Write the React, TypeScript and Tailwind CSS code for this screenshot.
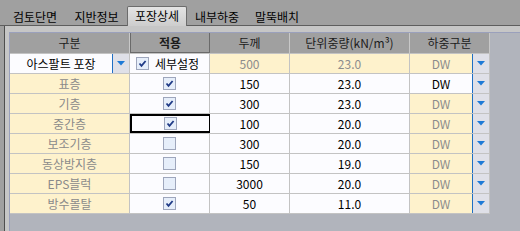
import React from "react";

const FONT = { fontFamily: '"Noto Sans CJK KR", "Noto Sans", sans-serif' };

const tabs = [
  { label: "검토단면", w: "w-[62px]" },
  { label: "지반정보", w: "w-[61px]" },
  { label: "포장상세", w: "w-[60px]", active: true },
  { label: "내부하중", w: "w-[60px]" },
  { label: "말뚝배치", w: "w-[60px]" },
];

const layers = [
  { name: "표층", checked: true, thick: "150", unit: "23.0", editable: true },
  { name: "기층", checked: true, thick: "300", unit: "23.0" },
  { name: "중간층", checked: true, thick: "100", unit: "20.0", focused: true },
  { name: "보조기층", checked: false, thick: "300", unit: "20.0" },
  { name: "동상방지층", checked: false, thick: "150", unit: "19.0" },
  { name: "EPS블럭", checked: false, thick: "3000", unit: "20.0" },
  { name: "방수몰탈", checked: true, thick: "50", unit: "11.0" },
];

function CheckBox({ checked }: { checked: boolean }) {
  return (
    <div className="flex h-[13px] w-[13px] items-center justify-center border border-[#9ea6bc] bg-[#e6eefa]">
      {checked ? (
        <svg width="11" height="11" viewBox="0 0 11 11">
          <path
            d="M2.5 5.5 L4.5 7.8 L8.6 3"
            fill="none"
            stroke="#1f3a86"
            strokeWidth="1.8"
          />
        </svg>
      ) : null}
    </div>
  );
}

function DropButton() {
  return (
    <div className="flex h-full w-[17px] shrink-0 items-center justify-center border-l border-[#1f6fc4] bg-[#dfe0e8]">
      <svg width="8" height="5" viewBox="0 0 8 5">
        <path d="M0 0 H8 L4 4.5 Z" fill="#1e7ad6" />
      </svg>
    </div>
  );
}

const cellBase =
  "flex h-full shrink-0 items-center justify-center border-r border-[#c3c3c3]";

export default function App() {
  return (
    <div
      className="relative h-[231px] w-[520px] overflow-hidden bg-[#a0a0a0] text-[12px] leading-none"
      style={FONT}
    >
      {/* tab strip */}
      <div className="flex h-[26px] items-end border-b border-[#5e5e5e] pl-[4px]">
        {tabs.map((t) =>
          t.active ? (
            <div
              key={t.label}
              className={`${t.w} -mb-px flex h-[20px] items-center justify-center rounded-t-[2px] border border-b-0 border-[#6c6c6c] bg-gradient-to-b from-[#e4e4e4] to-[#cdcdcd] pb-[2px] text-black`}
            >
              {t.label}
            </div>
          ) : (
            <div
              key={t.label}
              className={`${t.w} flex h-[18px] items-center justify-center pt-[1px] text-black`}
            >
              {t.label}
            </div>
          )
        )}
      </div>

      {/* tab page */}
      <div className="flex h-[205px]">
        <div className="w-[4px] shrink-0 bg-[#a0a0a0]" />
        <div className="flex flex-1 flex-col border-l border-[#4e4e4e] bg-[#c6c6c6] pl-[4px] pt-[6px]">
          <div className="flex-1 border-l border-t border-[#9aa0bc] bg-[#b1b4bc]">
            {/* header */}
            <div className="flex h-[21px] w-[480px] border-b border-[#c3c3c3] bg-[#a0a0a0] text-[#1c1c1c]">
              <div className="flex h-full w-[120px] items-center justify-center border-r border-[#c8c8c8]">
                구분
              </div>
              <div className="flex h-full w-[80px] items-center justify-center border border-t-0 border-[#6a6a6a] font-bold">
                적용
              </div>
              <div className="flex h-full w-[80px] items-center justify-center border-r border-[#c8c8c8]">
                두께
              </div>
              <div className="flex h-full w-[120px] items-center justify-center border-r border-[#c8c8c8]">
                단위중량(kN/m³)
              </div>
              <div className="flex h-full w-[80px] items-center justify-center border-r border-[#c8c8c8]">
                하중구분
              </div>
            </div>

            {/* pavement type row */}
            <div className="flex h-[20px] w-[480px] border-b border-[#c3c3c3]">
              <div className="flex h-full w-[120px] shrink-0 border-r border-[#c3c3c3] bg-[#fcfcff]">
                <div className="flex flex-1 items-center justify-center text-black">
                  아스팔트 포장
                </div>
                <DropButton />
              </div>
              <div className="flex h-full w-[80px] shrink-0 items-center gap-[6px] border-r border-[#c3c3c3] bg-[#fcfcff] pl-[6px] text-black">
                <CheckBox checked />
                <span>세부설정</span>
              </div>
              <div className={`${cellBase} w-[80px] bg-[#fef2cc] text-[#8c8c8c]`}>
                500
              </div>
              <div className={`${cellBase} w-[120px] bg-[#fef2cc] text-[#8c8c8c]`}>
                23.0
              </div>
              <div className="flex h-full w-[80px] shrink-0 border-r border-[#c3c3c3] bg-[#fef2cc]">
                <div className="flex flex-1 items-center justify-center text-[#8c8c8c]">
                  DW
                </div>
                <DropButton />
              </div>
            </div>

            {layers.map((row) => (
              <div
                key={row.name}
                className="flex h-[20px] w-[480px] border-b border-[#c3c3c3]"
              >
                <div className={`${cellBase} w-[120px] bg-[#fef2cc] text-[#8a8a8a]`}>
                  {row.name}
                </div>
                <div
                  className={`${cellBase} w-[80px] bg-[#fcfcff] ${
                    row.focused ? "border-2 border-black" : ""
                  }`}
                >
                  <CheckBox checked={row.checked} />
                </div>
                <div className={`${cellBase} w-[80px] bg-[#fcfcff] text-black`}>
                  {row.thick}
                </div>
                <div className={`${cellBase} w-[120px] bg-[#fcfcff] text-black`}>
                  {row.unit}
                </div>
                <div
                  className={`flex h-full w-[80px] shrink-0 border-r border-[#c3c3c3] ${
                    row.editable ? "bg-[#fcfcff]" : "bg-[#fef2cc]"
                  }`}
                >
                  <div
                    className={`flex flex-1 items-center justify-center ${
                      row.editable ? "text-black" : "text-[#8c8c8c]"
                    }`}
                  >
                    DW
                  </div>
                  <DropButton />
                </div>
              </div>
            ))}
          </div>
        </div>
      </div>
    </div>
  );
}
